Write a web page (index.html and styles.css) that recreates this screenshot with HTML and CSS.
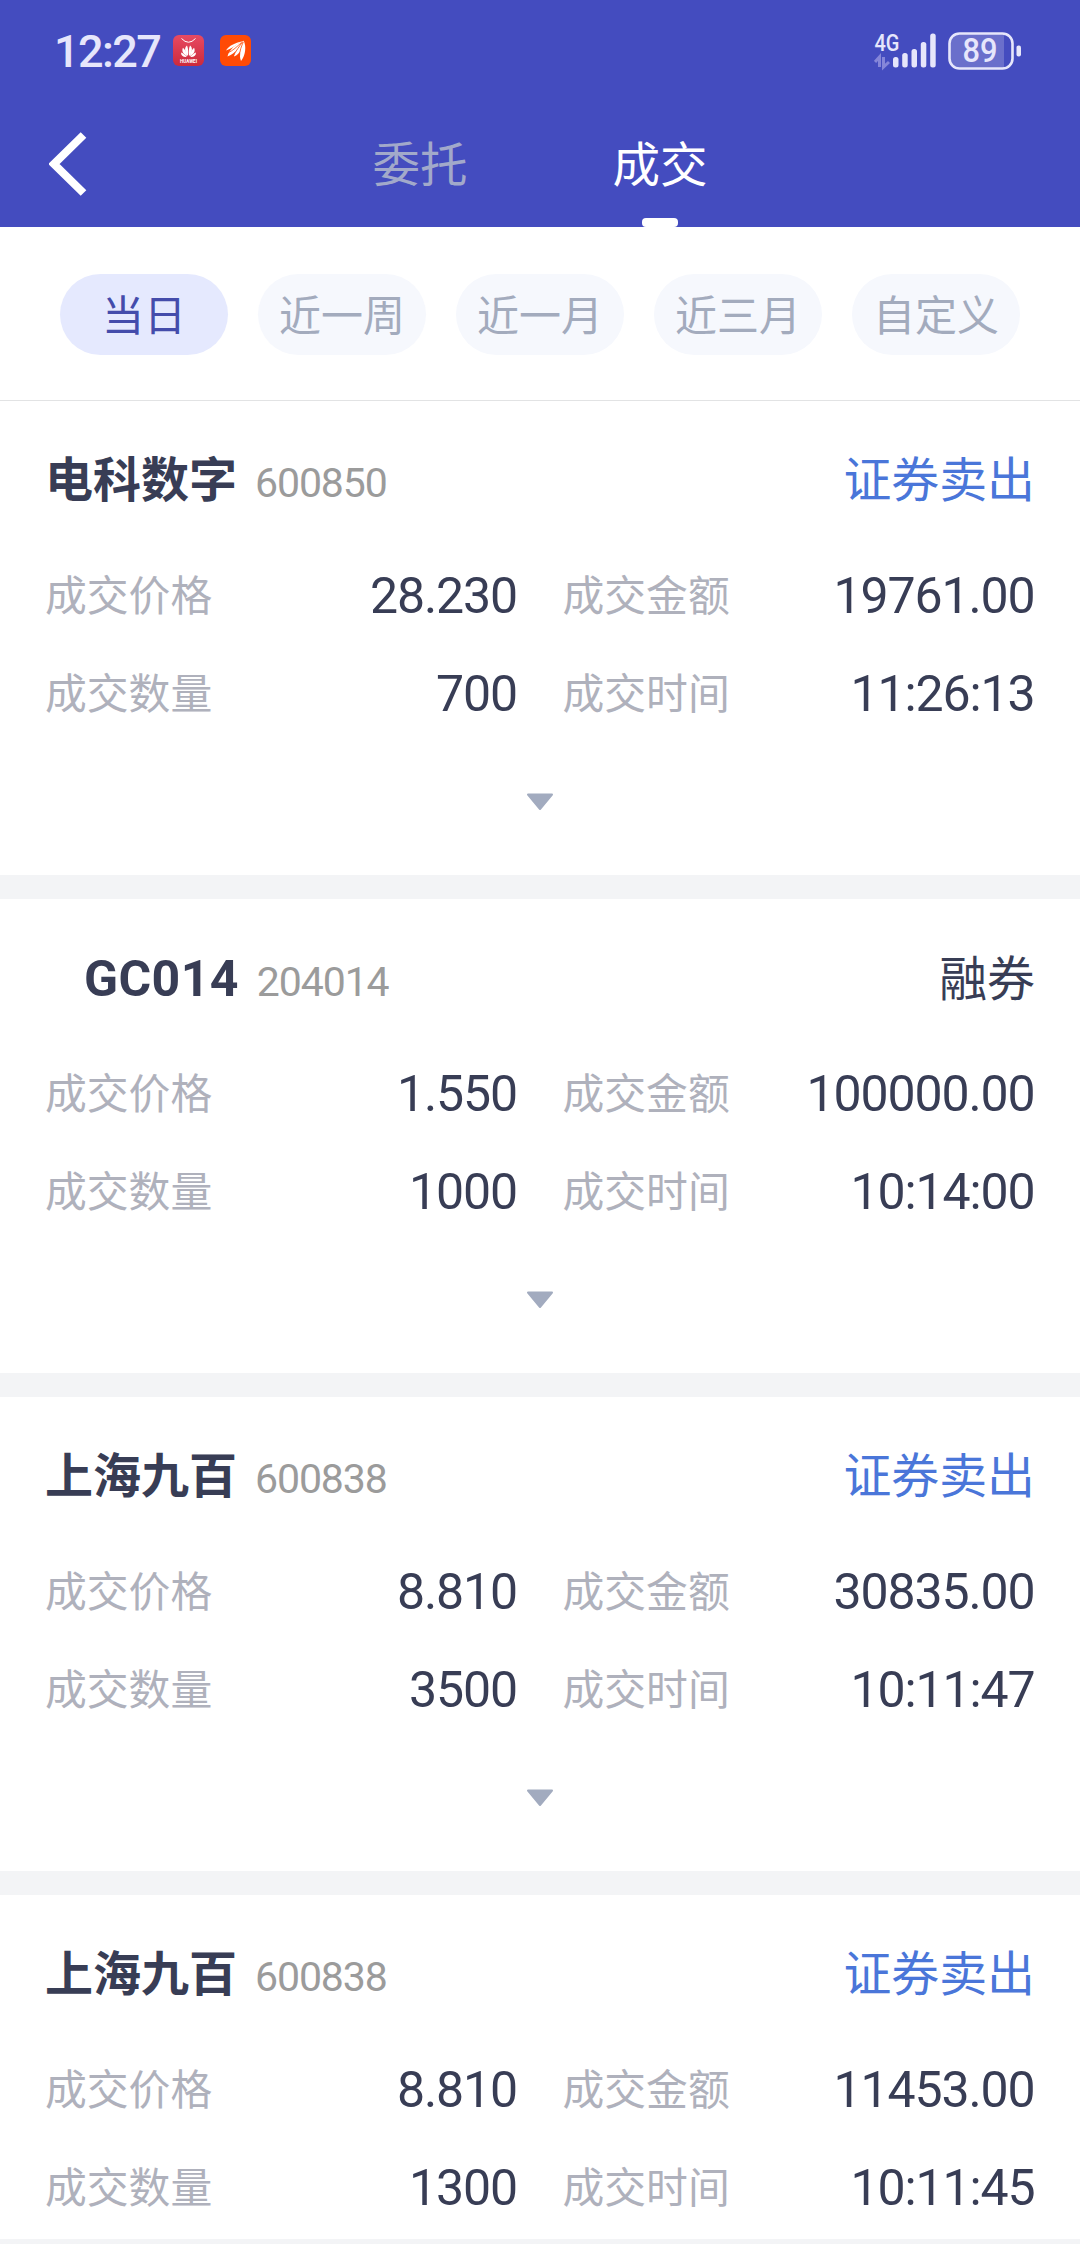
FILE: index.html
```html
<!DOCTYPE html>
<html lang="zh-CN">
<head>
  <meta charset="UTF-8" />
  <meta name="viewport" content="width=device-width, initial-scale=1" />
  <title>成交</title>
  <link rel="stylesheet" href="styles.css">
</head>
<body>
  <div class="header">
    <div class="status-bar">
      <span class="clock">12:27</span>
      <svg class="app-icon" viewBox="0 0 31 31">
        <defs>
          <linearGradient id="red" x1="0" y1="0" x2="0" y2="1">
            <stop offset="0" stop-color="#e84a62" />
            <stop offset="1" stop-color="#cb2a3c" />
          </linearGradient>
        </defs>
        <rect width="31" height="31" rx="6" fill="url(#red)" />
        <path d="M8.5 3.5Q15.500 11 22.500 3.500" fill="none" stroke="#fff" stroke-width="1" />
        <g fill="#fff">
          <path d="M15 21C11 17 11.500 12 14 10.500C15.300 13 15.400 17 15 21Z" />
          <path d="M16 21C20 17 19.500 12 17 10.500C15.700 13 15.600 17 16 21Z" />
          <path d="M14.200 21.300C9.500 19 8.500 15.500 10 12.800C12.300 15 13.800 18 14.200 21.300Z" />
          <path d="M16.800 21.300C21.500 19 22.500 15.500 21 12.800C18.700 15 17.200 18 16.800 21.300Z" />
          <path d="M13.700 22C10 22.300 8 20.500 8 17.500C10.500 18.500 12.500 20 13.700 22Z" />
          <path d="M17.300 22C21 22.300 23 20.500 23 17.500C20.500 18.500 18.500 20 17.300 22Z" />
          <text class="app-name" x="15.5" y="27.500" text-anchor="middle" textLength="17">HUAWEI</text>
        </g>
      </svg>
      <svg class="app-icon" viewBox="0 0 31 31">
        <rect width="31" height="31" rx="6" fill="#ff4a05" />
        <g fill="#fff">
          <path d="M6 15.500C9 10.500 15 8 22 6.500C17 8.500 13 13.500 6 15.500Z" />
          <path d="M7.500 21.500C9 15 15 9.500 22.500 6.300C20 12.500 15 18.500 7.500 21.500Z" />
          <path d="M14 21.500C15 16 18.500 10 23 6C23 13 20 19 14 21.500Z" />
          <path d="M21 26C18.500 20 20.500 11 23.700 5.500C26.500 12 25.500 20 21 26Z" />
        </g>
        <path d="M7 18.200C13 16 17.500 11 21.500 7.500M13.500 20.500C16 16 19.500 11 22.500 7M19.500 21.500C19.500 16 21.500 11 23.300 7" fill="none" stroke="#ff4a05" stroke-width="0.8" />
      </svg>
      <svg class="signal" viewBox="0 0 64 44">
        <text class="network" x="0.5" y="21.500" textLength="25" lengthAdjust="spacingAndGlyphs">4G</text>
        <path d="M1 33L5.500 28V38M9.500 28V38L15 33" fill="none" stroke="#8586d9" stroke-width="3" />
        <g fill="#e6e6fb">
          <rect x="19" y="28" width="5.500" height="10.500" rx="2.500" />
          <rect x="28.200" y="24" width="5.500" height="14.500" rx="2.500" />
          <rect x="37.500" y="20" width="5.500" height="18.500" rx="2.500" />
          <rect x="46.800" y="13" width="5.500" height="25.500" rx="2.500" />
          <rect x="56.200" y="4.500" width="5.500" height="34" rx="2.500" />
        </g>
      </svg>
      <svg class="battery" viewBox="0 0 74 38">
        <path d="M11 2H56V36H11Q2 36 2 27V11Q2 2 11 2Z" fill="#6a6fcb" />
        <rect x="1.500" y="1.500" width="63" height="35" rx="10" fill="none" stroke="#e6e6fb" stroke-width="2.600" />
        <rect x="68.500" y="13.500" width="4.500" height="11" rx="2" fill="#e6e6fb" />
        <text class="level" x="32" y="30" text-anchor="middle" textLength="35" lengthAdjust="spacingAndGlyphs">89</text>
      </svg>
    </div>
    <div class="nav">
      <svg class="back" viewBox="0 0 38 64">
        <path d="M34.500 3L5 32L34.500 61" fill="none" stroke="#fff" stroke-width="8" />
      </svg>
      <div class="tabs">
        <div class="tab">委托</div>
        <div class="tab active">成交</div>
      </div>
    </div>
  </div>

  <div class="filters">
    <div class="filter active">当日</div>
    <div class="filter">近一周</div>
    <div class="filter">近一月</div>
    <div class="filter">近三月</div>
    <div class="filter">自定义</div>
  </div>

  <div class="list">
    <div class="card">
      <div class="card-head">
        <span class="name">电科数字</span>
        <span class="code">600850</span>
        <span class="type sell">证券卖出</span>
      </div>
      <div class="info">
        <div class="item"><span class="label">成交价格</span><span class="value">28.230</span></div>
        <div class="item"><span class="label">成交金额</span><span class="value">19761.00</span></div>
        <div class="item"><span class="label">成交数量</span><span class="value">700</span></div>
        <div class="item"><span class="label">成交时间</span><span class="value">11:26:13</span></div>
      </div>
      <svg class="arrow" viewBox="0 0 28 18"><path d="M2 1.500H26L14 16Z" /></svg>
    </div>

    <div class="card">
      <div class="card-head">
        <span class="name indent">GC014</span>
        <span class="code">204014</span>
        <span class="type">融券</span>
      </div>
      <div class="info">
        <div class="item"><span class="label">成交价格</span><span class="value">1.550</span></div>
        <div class="item"><span class="label">成交金额</span><span class="value">100000.00</span></div>
        <div class="item"><span class="label">成交数量</span><span class="value">1000</span></div>
        <div class="item"><span class="label">成交时间</span><span class="value">10:14:00</span></div>
      </div>
      <svg class="arrow" viewBox="0 0 28 18"><path d="M2 1.500H26L14 16Z" /></svg>
    </div>

    <div class="card">
      <div class="card-head">
        <span class="name">上海九百</span>
        <span class="code">600838</span>
        <span class="type sell">证券卖出</span>
      </div>
      <div class="info">
        <div class="item"><span class="label">成交价格</span><span class="value">8.810</span></div>
        <div class="item"><span class="label">成交金额</span><span class="value">30835.00</span></div>
        <div class="item"><span class="label">成交数量</span><span class="value">3500</span></div>
        <div class="item"><span class="label">成交时间</span><span class="value">10:11:47</span></div>
      </div>
      <svg class="arrow" viewBox="0 0 28 18"><path d="M2 1.500H26L14 16Z" /></svg>
    </div>

    <div class="card">
      <div class="card-head">
        <span class="name">上海九百</span>
        <span class="code">600838</span>
        <span class="type sell">证券卖出</span>
      </div>
      <div class="info">
        <div class="item"><span class="label">成交价格</span><span class="value">8.810</span></div>
        <div class="item"><span class="label">成交金额</span><span class="value">11453.00</span></div>
        <div class="item"><span class="label">成交数量</span><span class="value">1300</span></div>
        <div class="item"><span class="label">成交时间</span><span class="value">10:11:45</span></div>
      </div>
    </div>
  </div>
</body>
</html>
```
FILE: styles.css
```css
* {
  box-sizing: border-box;
}

body {
  margin: 0;
  width: 1080px;
  height: 2244px;
  padding-bottom: 5px;
  display: flex;
  flex-direction: column;
  overflow: hidden;
  font-family: Roboto, "Noto Sans CJK SC", sans-serif;
  background: #f3f4f6;
  color: #383d55;
}

svg {
  display: block;
  flex: none;
}

.header {
  flex: none;
  height: 227px;
  background: #444cbf;
  color: #fff;
}

/* status bar */
.status-bar {
  display: flex;
  align-items: center;
  height: 101px;
  padding: 0 58px 0 54px;
}

.clock {
  width: 119px;
  padding-top: 2px;
  font-size: 45px;
  font-weight: 500;
  line-height: 60px;
  letter-spacing: -1.6px;
  color: #e6e6fb;
}

.app-icon {
  width: 31px;
  height: 31px;
  margin-right: 16px;
}

.app-name {
  font-size: 4.5px;
  font-weight: bold;
}

.signal {
  width: 64px;
  height: 44px;
  margin-left: auto;
  margin-right: 10px;
}

.network {
  font-size: 24px;
  font-weight: 500;
  fill: #e6e6fb;
}

.battery {
  width: 74px;
  height: 38px;
}

.level {
  font-size: 33px;
  font-weight: 500;
  fill: #e6e6fb;
}

/* nav */
.nav {
  display: flex;
  align-items: center;
  height: 126px;
  padding: 0 49px;
}

.back {
  width: 38px;
  height: 64px;
}

.tabs {
  flex: 1;
  display: flex;
  justify-content: center;
  gap: 145px;
  height: 126px;
  margin-right: 38px;
}

.tab {
  position: relative;
  font-size: 47.5px;
  line-height: 131px;
  color: #a2a9ca;
}

.tab.active {
  color: #fff;
}

.tab.active::after {
  content: "";
  position: absolute;
  left: 50%;
  bottom: 0;
  width: 36px;
  height: 9px;
  margin-left: -18px;
  border-radius: 4px;
  background: #fff;
}

/* date filters */
.filters {
  flex: none;
  display: flex;
  align-items: center;
  gap: 30px;
  height: 174px;
  padding: 2px 60px 1px;
  border-bottom: 1px solid #e2e3e4;
  background: #fff;
}

.filter {
  flex: 1;
  height: 81px;
  border-radius: 41px;
  font-size: 42px;
  line-height: 86px;
  text-align: center;
  background: #f6f8fd;
  color: #a3abbd;
}

.filter.active {
  background: #e5e9fe;
  color: #444cab;
}

/* deals */
.list {
  flex: 1;
  min-height: 0;
  overflow: hidden;
}

.card {
  height: 474px;
  margin-bottom: 24px;
  padding: 45px 45px 0;
  background: #fff;
}

.card-head {
  display: flex;
  align-items: baseline;
  height: 70px;
  line-height: 70px;
}

.name {
  font-size: 48px;
  font-weight: bold;
}

.name.indent {
  padding-left: 39px;
  font-size: 50px;
  letter-spacing: 0.4px;
}

.code {
  margin-left: 18px;
  font-size: 41px;
  letter-spacing: -1.1px;
  color: #9b9b9b;
}

.type {
  margin-left: auto;
  font-size: 47.9px;
}

.type.sell {
  color: #4a76d9;
}

.info {
  display: grid;
  grid-template-columns: 1fr 1fr;
  column-gap: 45px;
  margin-top: 31px;
}

.item {
  display: flex;
  justify-content: space-between;
  height: 98px;
  line-height: 99px;
}

.label {
  font-size: 41.8px;
  color: #afb1bc;
}

.value {
  margin-right: 0.5px;
  font-size: 50px;
  letter-spacing: -1.1px;
}

.arrow {
  width: 28px;
  height: 18px;
  margin: 50px auto 0;
  fill: #a2abbf;
  stroke: #a2abbf;
  stroke-width: 2;
  stroke-linejoin: round;
}
```
